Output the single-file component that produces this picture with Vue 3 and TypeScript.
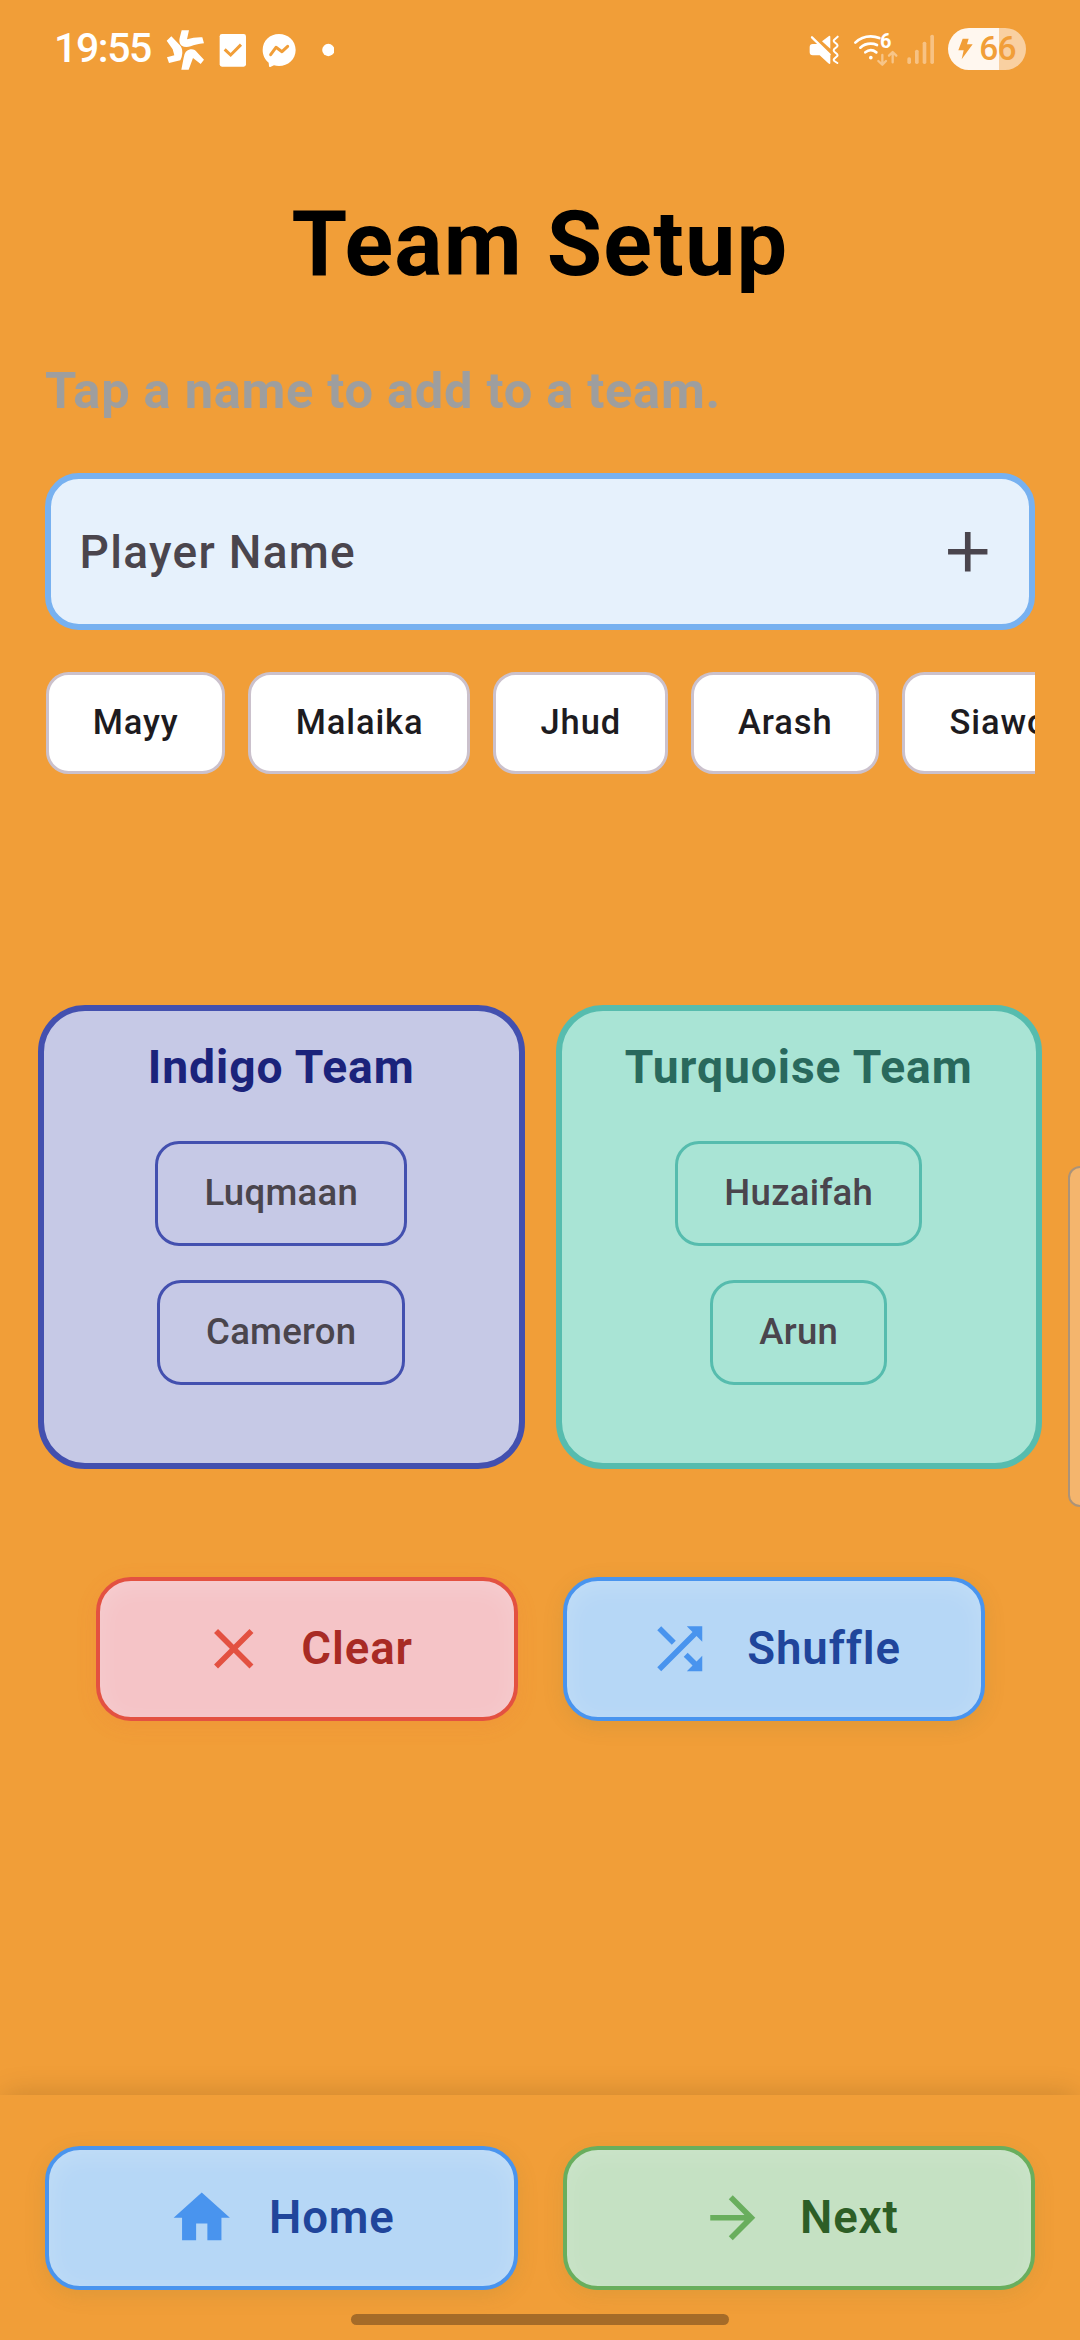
<script setup lang="ts">
import { ref } from 'vue'

interface Team {
  key: string
  title: string
  members: string[]
}

const players = ref<string[]>(['Mayy', 'Malaika', 'Jhud', 'Arash', 'Siawosh'])

const teams = ref<Team[]>([
  { key: 'indigo', title: 'Indigo Team', members: ['Luqmaan', 'Cameron'] },
  { key: 'turquoise', title: 'Turquoise Team', members: ['Huzaifah', 'Arun'] }
])

const icons = {
  close: 'M19 6.41 17.59 5 12 10.59 6.41 5 5 6.41 10.59 12 5 17.59 6.41 19 12 13.41 17.59 19 19 17.59 13.41 12z',
  shuffle: 'M10.59 9.17 5.41 4 4 5.41l5.17 5.17 1.42-1.41zM14.5 4l2.04 2.04L4 18.59 5.41 20 17.96 7.46 20 9.5V4h-5.5zm.33 9.41-1.41 1.41 3.13 3.13L14.5 20H20v-5.5l-2.04 2.04-3.13-3.13z',
  home: 'M10 20v-6h4v6h5v-8h3L12 3 2 12h3v8z',
  next: 'M12 4l-1.41 1.41L16.17 11H4v2h12.17l-5.58 5.59L12 20l8-8z',
  add: 'M19 13h-6v6h-2v-6H5v-2h6V5h2v6h6v2z'
}

const actions = [
  { label: 'Clear', tone: 'red', icon: icons.close },
  { label: 'Shuffle', tone: 'blue', icon: icons.shuffle }
]

const navigation = [
  { label: 'Home', tone: 'blue', icon: icons.home },
  { label: 'Next', tone: 'green', icon: icons.next }
]
</script>

<template>
  <div class="screen">
    <header class="status">
      <div class="status-left">
        <span class="clock">19:55</span>
        <svg class="pinwheel" viewBox="408 54 116 132" fill="#fff">
          <path d="M455 61H477L471 88Q493 81 517 82L522 100Q497 103 482 109Q466 114 455 107Q445 99 449 84Z" />
          <path d="M424 79L447 103Q458 113 457 129Q456 142 451 151L417 159L411 142L433 136L428 118L410 92Z" />
          <path d="M454 179L461 143Q464 121 481 118Q494 116 501 127L522 149L512 162L489 144L476 179Z" />
        </svg>
        <svg class="task" viewBox="566 54 83 132">
          <rect x="568" y="72" width="79" height="98" rx="7" fill="#fff" />
          <path d="M583 118L601 135L632 104" fill="none" stroke="#f19e38" stroke-width="9" />
        </svg>
        <svg class="messenger" viewBox="697 54 103 132">
          <path d="M748 72C775 72 798 92 798 120C798 148 775 168 748 168Q740 168 733 166L722 171Q718 172 718 168L717 158C706 149 699 136 699 120C699 92 721 72 748 72Z" fill="#fff" />
          <path d="M723 134L739 112L757 125L774 109" fill="none" stroke="#f19e38" stroke-width="9" stroke-linejoin="round" stroke-linecap="round" />
        </svg>
        <svg class="more" viewBox="875 54 38 132"><circle cx="894" cy="120" r="18.500" fill="#fff" /></svg>
      </div>
      <div class="status-right">
        <svg class="mute" viewBox="86 54 92 132">
          <path d="M125 94L146 78Q150 76 150 81V116Z" fill="#fff" />
          <path d="M97 102H112L150 138V158Q150 165 144 160L118 136H97Q88 136 88 127V111Q88 102 97 102Z" fill="#fff" />
          <path d="M95 82L148 134" stroke="#fff" stroke-width="7" stroke-linecap="round" />
          <path d="M172 80L161 90Q159 93 162 96L170 103Q173 107 170 110L161 118Q159 122 162 125L170 132Q173 136 170 139L161 147Q159 150 162 153L171 159" fill="none" stroke="#fff" stroke-width="6" stroke-linecap="round" stroke-linejoin="round" />
        </svg>
        <svg class="wifi" viewBox="218 54 136 132">
          <g fill="none" stroke="#fff" stroke-width="8" stroke-linecap="round">
            <path d="M225 98Q244 79 271 79Q285 79 297 84" />
            <path d="M240 113Q253 101 271 101Q281 101 290 105" />
            <path d="M255 127Q271 114 288 127" />
          </g>
          <circle cx="271.500" cy="143" r="5.500" fill="#fff" />
          <text class="wifi-gen" x="299" y="115">6</text>
          <g fill="none" stroke="#f7c588" stroke-width="7" stroke-linecap="round" stroke-linejoin="round">
            <path d="M306 135V163M294 153L306 164L317 153" />
            <path d="M337 157V127M326 137L337 126L348 137" />
          </g>
        </svg>
        <svg class="signal" viewBox="380 54 83 132" fill="#f7c284">
          <rect x="381" y="142" width="11" height="20" rx="5" />
          <rect x="404" y="119" width="11" height="43" rx="5" />
          <rect x="427" y="95" width="11" height="67" rx="5" />
          <rect x="450" y="74" width="11" height="88" rx="5" />
        </svg>
        <div class="battery">
          <svg class="bolt" viewBox="532 84 46 64"><path d="M546 86H564L559 103H576L543 148L549 121H533Z" fill="#f19e38" /></svg>
          <span>66</span>
        </div>
      </div>
    </header>

    <main class="content">
      <h1>Team Setup</h1>
      <p class="hint">Tap a name to add to a team.</p>

      <div class="field">
        <span>Player Name</span>
        <svg class="icon" viewBox="0 0 24 24"><path :d="icons.add" /></svg>
      </div>

      <div class="players">
        <button v-for="name in players" :key="name" class="player">{{ name }}</button>
      </div>

      <div class="teams">
        <section v-for="team in teams" :key="team.key" class="team" :class="team.key">
          <h2>{{ team.title }}</h2>
          <div class="members">
            <button v-for="member in team.members" :key="member" class="member">{{ member }}</button>
          </div>
        </section>
      </div>

      <div class="actions">
        <button v-for="item in actions" :key="item.label" class="button" :class="item.tone">
          <svg class="icon" viewBox="0 0 24 24"><path :d="item.icon" /></svg>
          <span>{{ item.label }}</span>
        </button>
      </div>
    </main>

    <footer class="bar">
      <nav class="nav">
        <button v-for="item in navigation" :key="item.label" class="button" :class="item.tone">
          <svg class="icon" viewBox="0 0 24 24"><path :d="item.icon" /></svg>
          <span>{{ item.label }}</span>
        </button>
      </nav>
      <div class="gesture"></div>
    </footer>

    <div class="edge-panel"></div>
  </div>
</template>

<style>
body {
  background: #f19e38;
}
</style>

<style scoped>
.screen {
  position: relative;
  display: flex;
  flex-direction: column;
  width: 1080px;
  height: 2340px;
  overflow: hidden;
  background: #f19e38;
  font-family: Roboto, sans-serif;
}

button {
  margin: 0;
  font-family: inherit;
  background: none;
}

.status {
  display: flex;
  justify-content: space-between;
  height: 100px;
  padding: 0 54px;
}

.status-left,
.status-right {
  display: flex;
  align-items: center;
}

.status svg {
  display: block;
  height: 44px;
}

.clock {
  padding-bottom: 4px;
  font-size: 41px;
  font-weight: 500;
  letter-spacing: -1.4px;
  color: #fff;
}

.pinwheel { width: 38.67px; margin-left: 15px; }
.task { width: 27.67px; margin-left: 14px; }
.messenger { width: 34.33px; margin-left: 16px; }
.more { width: 12.67px; margin-left: 25px; }
.mute { width: 30.67px; }
.wifi { width: 45.33px; margin-left: 13.33px; }
.signal { width: 27.67px; margin-left: 8.67px; }

.wifi-gen {
  font-size: 60px;
  font-weight: 700;
  fill: #fff;
}

.battery {
  display: flex;
  align-items: center;
  box-sizing: border-box;
  width: 78px;
  height: 42px;
  margin: -2px 0 0 13.67px;
  padding-left: 9.5px;
  border-radius: 21px;
  background: linear-gradient(90deg, #fff7ef 51px, #f9d0a1 51px);
}

.status .bolt {
  width: 15.33px;
  height: 21.33px;
}

.battery span {
  margin-left: 6.5px;
  font-size: 33.5px;
  line-height: 42px;
  font-weight: 500;
  letter-spacing: -0.8px;
  color: #f19e38;
}

.content {
  display: flex;
  flex: 1;
  flex-direction: column;
}

h1 {
  margin: 91px 0 0;
  font-size: 90px;
  line-height: 108px;
  font-weight: 700;
  letter-spacing: 1.27px;
  text-align: center;
  color: #000;
}

.hint {
  margin: 62px 45px 0;
  font-size: 50.625px;
  line-height: 60px;
  font-weight: 700;
  letter-spacing: 0.7px;
  color: #9e9e9e;
}

.field {
  display: flex;
  align-items: center;
  justify-content: space-between;
  box-sizing: border-box;
  height: 157px;
  margin: 52px 45px 0;
  padding: 0 27.5px 0 28.5px;
  border: 6px solid #77b1f0;
  border-radius: 33.75px;
  background: #e6f1fc;
}

.field span {
  padding-top: 1px;
  font-size: 46px;
  font-weight: 500;
  letter-spacing: 1.3px;
  color: #4a454d;
}

.icon {
  display: block;
  flex: none;
  width: 67.5px;
  height: 67.5px;
  fill: currentColor;
}

.field .icon {
  color: #4a454d;
}

.players {
  display: flex;
  gap: 23px;
  height: 102px;
  margin: 42px 45px 0;
  padding-left: 0.5px;
  overflow: hidden;
}

.player {
  flex: none;
  box-sizing: border-box;
  height: 102px;
  padding: 0 43.75px 2px 44.25px;
  border: 3px solid #cbc1cc;
  border-radius: 22.5px;
  background: #fff;
  font-size: 34.5px;
  font-weight: 500;
  letter-spacing: 0.9px;
  color: #1d1b20;
}

.teams {
  display: flex;
  gap: 31px;
  margin: 231px 38px 0;
}

.team {
  display: flex;
  flex: 1;
  flex-direction: column;
  box-sizing: border-box;
  height: 464px;
  padding-top: 29px;
  border: 6px solid;
  border-radius: 47px;
}

.indigo { border-color: #4350af; background: #c6c9e6; }
.turquoise { border-color: #56bcae; background: #a9e4d5; }

h2 {
  margin: 0;
  font-size: 46.2px;
  line-height: 54px;
  font-weight: 700;
  letter-spacing: 0.95px;
  text-align: center;
}

.indigo h2 { color: #1b237b; }
.turquoise h2 { color: #29695d; }

.members {
  display: flex;
  flex-direction: column;
  align-items: center;
  gap: 34px;
  margin-top: 47px;
}

.member {
  box-sizing: border-box;
  height: 105px;
  padding: 0 46px 3px;
  border: 3px solid;
  border-radius: 24px;
  font-size: 36.5625px;
  font-weight: 500;
  letter-spacing: 0.28px;
  color: #4a454d;
}

.indigo .member { border-color: #4350af; }
.turquoise .member { border-color: #56bcae; }

.actions {
  display: flex;
  gap: 45px;
  margin: 108px 95.5px 0;
}

.button {
  display: flex;
  flex: 1;
  align-items: center;
  justify-content: center;
  gap: 33.75px;
  box-sizing: border-box;
  height: 144px;
  padding: 0;
  border: 4px solid currentColor;
  border-radius: 35px;
  font-size: 45.6px;
  font-weight: 600;
  letter-spacing: 0.9px;
}

.button span {
  padding-bottom: 2px;
}

.red {
  color: #e35141;
  background: #f5c4c7;
  box-shadow: 0 5px 22px rgba(240, 90, 60, 0.1), inset 0 6px 24px rgba(255, 255, 255, 0.17);
}

.blue {
  color: #4994ee;
  background: #b6d7f6;
  box-shadow: 0 5px 22px rgba(90, 110, 60, 0.12), inset 0 6px 24px rgba(255, 255, 255, 0.17);
}

.green {
  color: #69ae5d;
  background: #c5e1c3;
  box-shadow: 0 5px 22px rgba(90, 120, 60, 0.1), inset 0 6px 24px rgba(255, 255, 255, 0.12);
}

.red span { color: #a82b24; }
.blue span { color: #20459b; }
.green span { color: #2d5e26; }

.bar {
  display: flex;
  flex-direction: column;
  box-sizing: border-box;
  height: 245px;
  padding-top: 51px;
  background: #f19e38;
  box-shadow: 0 -4px 28px -4px rgba(0, 0, 0, 0.17);
}

.nav {
  display: flex;
  gap: 45px;
  margin: 0 45px;
}

.gesture {
  width: 378px;
  height: 11px;
  margin: 24px auto 0;
  border-radius: 6px;
  background: #a56b28;
}

/* Edge panel handle that floats over the right side of the screen */
.edge-panel {
  position: absolute;
  top: 1166px;
  right: -20px;
  box-sizing: border-box;
  width: 32px;
  height: 341px;
  border: 2px solid #ab9379;
  border-radius: 12px;
  background: #f4b56d;
}
</style>
